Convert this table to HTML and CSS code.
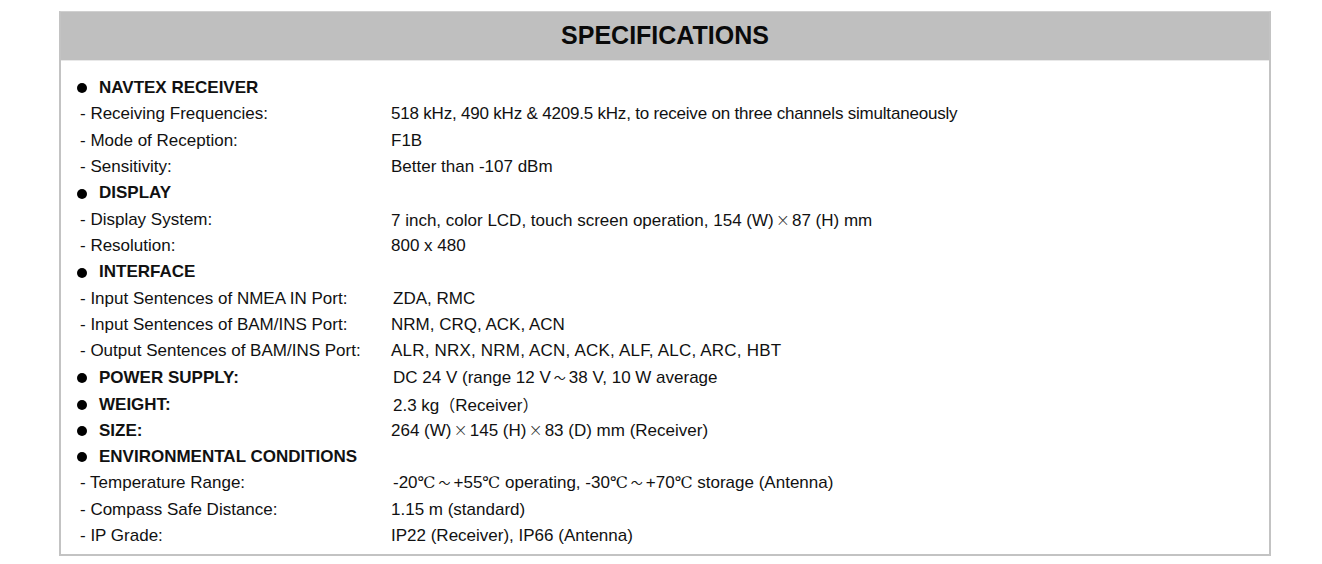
FILE: index.html
```html
<!DOCTYPE html>
<html>
<head>
<meta charset="utf-8">
<link rel="stylesheet" href="styles.css">
</head>
<body>
<div class="page">
  <section class="spec">
    <h1 class="title">SPECIFICATIONS</h1>
    <div class="list">
      <div class="row head"><span class="lbl"><i class="dot"></i>NAVTEX RECEIVER</span></div>
      <div class="row"><span class="lbl">- Receiving Frequencies:</span><span class="val tight">518 kHz, 490 kHz &amp; 4209.5 kHz, to receive on three channels simultaneously</span></div>
      <div class="row"><span class="lbl">- Mode of Reception:</span><span class="val">F1B</span></div>
      <div class="row"><span class="lbl">- Sensitivity:</span><span class="val">Better than -107 dBm</span></div>
      <div class="row head"><span class="lbl"><i class="dot"></i>DISPLAY</span></div>
      <div class="row"><span class="lbl">- Display System:</span><span class="val">7 inch, color LCD, touch screen operation, 154 (W)<span class="x">×</span>87 (H) mm</span></div>
      <div class="row"><span class="lbl">- Resolution:</span><span class="val">800 x 480</span></div>
      <div class="row head"><span class="lbl"><i class="dot"></i>INTERFACE</span></div>
      <div class="row"><span class="lbl">- Input Sentences of NMEA IN Port:</span><span class="val ind">ZDA, RMC</span></div>
      <div class="row"><span class="lbl">- Input Sentences of BAM/INS Port:</span><span class="val">NRM, CRQ, ACK, ACN</span></div>
      <div class="row"><span class="lbl">- Output Sentences of BAM/INS Port:</span><span class="val wide">ALR, NRX, NRM, ACN, ACK, ALF, ALC, ARC, HBT</span></div>
      <div class="row head"><span class="lbl"><i class="dot"></i>POWER SUPPLY:</span><span class="val ind">DC 24 V (range 12 V<span class="t">～</span>38 V, 10 W average</span></div>
      <div class="row head"><span class="lbl"><i class="dot"></i>WEIGHT:</span><span class="val ind">2.3 kg<span class="p">（</span>Receiver<span class="p">）</span></span></div>
      <div class="row head"><span class="lbl"><i class="dot"></i>SIZE:</span><span class="val">264 (W)<span class="x">×</span>145 (H)<span class="x">×</span>83 (D) mm (Receiver)</span></div>
      <div class="row head"><span class="lbl"><i class="dot"></i>ENVIRONMENTAL CONDITIONS</span></div>
      <div class="row"><span class="lbl">- Temperature Range:</span><span class="val ind">-20<span class="c">℃</span><span class="t">～</span>+55<span class="c">℃</span> operating, -30<span class="c">℃</span><span class="t">～</span>+70<span class="c">℃</span> storage (Antenna)</span></div>
      <div class="row"><span class="lbl">- Compass Safe Distance:</span><span class="val">1.15 m (standard)</span></div>
      <div class="row"><span class="lbl">- IP Grade:</span><span class="val">IP22 (Receiver), IP66 (Antenna)</span></div>
    </div>
  </section>
</div>
</body>
</html>
```
FILE: styles.css
```css
html, body {
  margin: 0;
  padding: 0;
  background: #ffffff;
}
body {
  font-family: "Liberation Sans", Arial, "Noto Sans CJK SC", sans-serif;
  color: #111111;
}
.page {
  padding: 11px 0 0 59px;
}
.spec {
  width: 1212px;
  box-sizing: border-box;
  border: 2px solid #c3c3c3;
  border-top: 1px solid #d0d0d0;
  height: 545px;
}
.title {
  margin: 0;
  height: 48px;
  background: #bfbfbf;
  border-bottom: 1px solid #e8e8e8;
  font-size: 25px;
  font-weight: bold;
  text-align: center;
  line-height: 47px;
  color: #0a0a0a;
  padding-left: 0;
}
.list {
  padding: 14px 0 0 17px;
}
.row {
  display: grid;
  grid-template-columns: 313px 1fr;
  height: 26.35px;
  line-height: 26.35px;
  font-size: 17px;
  white-space: nowrap;
}
.lbl {
  padding-left: 2px;
}
.head .lbl {
  padding-left: 0;
  font-weight: bold;
  display: flex;
  align-items: center;
}
.dot {
  display: inline-block;
  width: 10px;
  height: 10px;
  border-radius: 50%;
  background: #000;
  margin: 0 12px 0 -1px;
}
.ind {
  padding-left: 2px;
}
.tight {
  letter-spacing: -0.2px;
}
.wide {
  letter-spacing: 0.2px;
}
.x {
  font-family: "DejaVu Sans", sans-serif;
  font-weight: 300;
  font-size: 17px;
  margin: 0 2px;
  color: #333;
}
.t {
  font-family: "Noto Sans CJK SC", sans-serif;
  font-size: 12px;
  margin: 0 3px;
}
.p {
  font-family: "Noto Sans CJK SC", sans-serif;
  font-size: 16px;
}
.c {
  font-family: "DejaVu Serif", "Liberation Serif", serif;
  font-size: 16px;
}
```
